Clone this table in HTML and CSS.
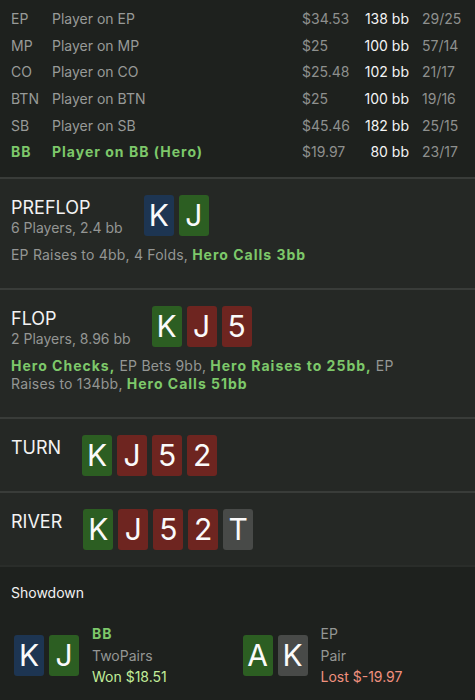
FILE: index.html
```html
<!DOCTYPE html>
<html>
<head>
<meta charset="utf-8">
<link rel="stylesheet" href="styles.css">
</head>
<body>
<div class="page">
  <table class="players">
    <tr><td class="pos">EP</td><td class="name">Player on EP</td><td class="money">$34.53</td><td class="bb">138 bb</td><td class="ratio">29/25</td></tr>
    <tr><td class="pos">MP</td><td class="name">Player on MP</td><td class="money">$25</td><td class="bb">100 bb</td><td class="ratio">57/14</td></tr>
    <tr><td class="pos">CO</td><td class="name">Player on CO</td><td class="money">$25.48</td><td class="bb">102 bb</td><td class="ratio">21/17</td></tr>
    <tr><td class="pos">BTN</td><td class="name">Player on BTN</td><td class="money">$25</td><td class="bb">100 bb</td><td class="ratio">19/16</td></tr>
    <tr><td class="pos">SB</td><td class="name">Player on SB</td><td class="money">$45.46</td><td class="bb">182 bb</td><td class="ratio">25/15</td></tr>
    <tr class="hero"><td class="pos">BB</td><td class="name">Player on BB (Hero)</td><td class="money">$19.97</td><td class="bb">80 bb</td><td class="ratio">23/17</td></tr>
  </table>

  <section class="street street--actions">
    <div class="street-head">
      <div class="street-info">
        <div class="street-title">PREFLOP</div>
        <div class="street-sub">6 Players, 2.4 bb</div>
      </div>
      <div class="cards">
        <span class="card card--blue">K</span><span class="card card--green">J</span>
      </div>
    </div>
    <p class="actions">EP Raises to 4bb, 4 Folds, <b class="hero-act">Hero Calls 3bb</b></p>
  </section>

  <section class="street street--actions">
    <div class="street-head">
      <div class="street-info">
        <div class="street-title">FLOP</div>
        <div class="street-sub">2 Players, 8.96 bb</div>
      </div>
      <div class="cards">
        <span class="card card--green">K</span><span class="card card--red">J</span><span class="card card--red">5</span>
      </div>
    </div>
    <p class="actions"><b class="hero-act">Hero Checks,</b> EP Bets 9bb, <b class="hero-act">Hero Raises to 25bb,</b> EP Raises to 134bb, <b class="hero-act">Hero Calls 51bb</b></p>
  </section>

  <section class="street">
    <div class="street-head">
      <div class="street-info">
        <div class="street-title">TURN</div>
      </div>
      <div class="cards">
        <span class="card card--green">K</span><span class="card card--red">J</span><span class="card card--red">5</span><span class="card card--red">2</span>
      </div>
    </div>
  </section>

  <section class="street">
    <div class="street-head">
      <div class="street-info">
        <div class="street-title">RIVER</div>
      </div>
      <div class="cards">
        <span class="card card--green">K</span><span class="card card--red">J</span><span class="card card--red">5</span><span class="card card--red">2</span><span class="card card--gray">T</span>
      </div>
    </div>
  </section>

  <section class="showdown">
    <div class="showdown-title">Showdown</div>
    <div class="hands">
      <div class="hand">
        <div class="cards">
          <span class="card card--blue">K</span><span class="card card--green">J</span>
        </div>
        <div class="hand-info">
          <div class="hand-pos hand-pos--hero">BB</div>
          <div class="hand-rank">TwoPairs</div>
          <div class="hand-won">Won $18.51</div>
        </div>
      </div>
      <div class="hand">
        <div class="cards">
          <span class="card card--green">A</span><span class="card card--gray">K</span>
        </div>
        <div class="hand-info">
          <div class="hand-pos">EP</div>
          <div class="hand-rank">Pair</div>
          <div class="hand-lost">Lost $-19.97</div>
        </div>
      </div>
    </div>
  </section>
</div>
</body>
</html>
```

FILE: styles.css
```css
* { box-sizing: border-box; }
html, body {
  margin: 0;
  padding: 0;
  background: #1e211e;
}
body {
  font-family: Inter, "Noto Sans", "Liberation Sans", sans-serif;
  font-size: 14px;
  color: #9a9c9a;
  -webkit-font-smoothing: antialiased;
}
.page {
  width: 475px;
  height: 700px;
  overflow: hidden;
  background: #1e211e;
}
.players {
  border-collapse: collapse;
  margin: 5px 0 12px 0;
  width: 475px;
}
.players td {
  height: 26.7px;
  padding: 0;
  white-space: nowrap;
  color: #989a98;
}
.players .pos { padding-left: 11px; width: 52px; }
.players .name { width: 250px; }
.players .money { width: 60px; color: #8e908e; }
.players .bb { width: 47px; text-align: right; color: #f4f4f4; padding-right: 0; }
.players .ratio { padding-left: 13px; color: #8e908e; }
.players .hero .pos,
.players .hero .name { color: #7dc86a; font-weight: 700; letter-spacing: 1px; }

.street {
  background: #252825;
  border-top: 2px solid #393c39;
  padding: 16px 11px 15px;
}
.street--actions { padding-bottom: 16px; }
.street-head {
  display: flex;
  align-items: flex-start;
}
.street-info {
  padding-top: 4px;
  margin-right: 21px;
}
.street-title {
  color: #f2f2f2;
  font-size: 18px;
  line-height: 17px;
  margin-bottom: 5px;
}
.street-sub {
  font-size: 14px;
  line-height: 14px;
  color: #949694;
}
.actions {
  margin: 10px 0 8px;
  padding-right: 40px;
  line-height: 18px;
  letter-spacing: 0.2px;
  color: #949694;
}
.hero-act { color: #7dc86a; font-weight: 700; letter-spacing: 1px; }

.cards { display: flex; gap: 5px; }
.card {
  width: 30px;
  height: 41px;
  border-radius: 3px;
  color: #fafafa;
  font-size: 30px;
  line-height: 41px;
  text-align: center;
}
.card--blue { background: #1d3552; }
.card--green { background: #2c5e22; }
.card--red { background: #6e2520; }
.card--gray { background: #484a48; }

.showdown {
  border-top: 2px solid #2a2d2a;
  padding: 17px 0 0 0;
}
.showdown-title {
  padding-left: 11px;
  color: #f2f2f2;
  font-size: 14px;
  line-height: 18px;
}
.hands {
  display: grid;
  grid-template-columns: 1fr 1fr;
  padding: 21px 4px 0 14px;
}
.hand {
  display: flex;
  align-items: center;
}
.hand .cards { margin-right: 13px; }
.hand-info { line-height: 21.5px; font-size: 14px; }
.hand-pos { color: #949694; }
.hand-pos--hero { color: #7dc86a; font-weight: 700; letter-spacing: 1px; }
.hand-rank { color: #949694; }
.hand-won { color: #c2ee9a; }
.hand-lost { color: #f0907e; }
```
